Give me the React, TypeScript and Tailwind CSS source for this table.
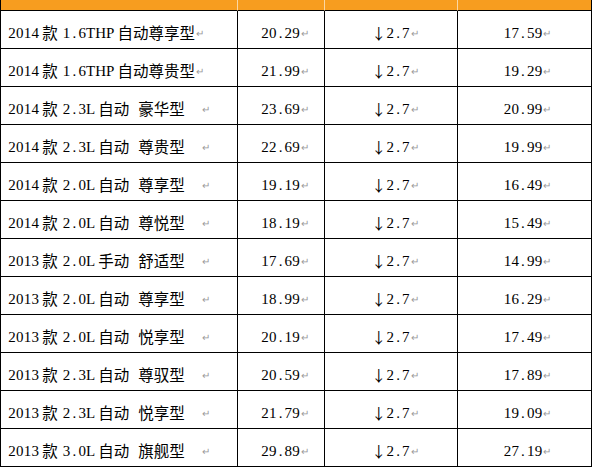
type Row = { year: string; spec: string; trans: string; trim?: string; price: string; final: string };

const rows: Row[] = [
  { year: '2014', spec: '1.6THP', trans: '自动尊享型', price: '20.29', final: '17.59' },
  { year: '2014', spec: '1.6THP', trans: '自动尊贵型', price: '21.99', final: '19.29' },
  { year: '2014', spec: '2.3L', trans: '自动', trim: '豪华型', price: '23.69', final: '20.99' },
  { year: '2014', spec: '2.3L', trans: '自动', trim: '尊贵型', price: '22.69', final: '19.99' },
  { year: '2014', spec: '2.0L', trans: '自动', trim: '尊享型', price: '19.19', final: '16.49' },
  { year: '2014', spec: '2.0L', trans: '自动', trim: '尊悦型', price: '18.19', final: '15.49' },
  { year: '2013', spec: '2.0L', trans: '手动', trim: '舒适型', price: '17.69', final: '14.99' },
  { year: '2013', spec: '2.0L', trans: '自动', trim: '尊享型', price: '18.99', final: '16.29' },
  { year: '2013', spec: '2.0L', trans: '自动', trim: '悦享型', price: '20.19', final: '17.49' },
  { year: '2013', spec: '2.3L', trans: '自动', trim: '尊驭型', price: '20.59', final: '17.89' },
  { year: '2013', spec: '2.3L', trans: '自动', trim: '悦享型', price: '21.79', final: '19.09' },
  { year: '2013', spec: '3.0L', trans: '自动', trim: '旗舰型', price: '29.89', final: '27.19' },
];

const cjk = { fontFamily: '"Noto Sans CJK SC", sans-serif' };

// half-width digits like SimSun: every digit and dot takes the same width
const Half = ({ text }: { text: string }) => (
  <span className="inline-flex">
    {text.split('').map((c, i) =>
      /[0-9.]/.test(c) ? (
        <span key={i} className="inline-block w-[7.8px] text-center">{c}</span>
      ) : (
        <span key={i}>{c}</span>
      )
    )}
  </span>
);

// Word paragraph mark
const Mark = ({ className = '' }: { className?: string }) => (
  <span className={`ml-[1px] text-[10px] leading-none text-[#9a9a9a] ${className}`} style={cjk}>
    ↵
  </span>
);

const cell = 'flex h-[38px] items-center border-r border-b border-black pt-[7px]';

export default function App() {
  return (
    <div
      className="h-[472px] w-[595px] bg-white text-[15px] text-black"
      style={{ fontFamily: '"Liberation Serif", "Noto Sans CJK SC", serif' }}
    >
      <div className="grid w-[592px] grid-cols-[237px_87px_133px_134px] border-l border-black">
        {/* header */}
        <div className="h-[11px] border-r border-b border-r-[#fbd7a4] border-b-black bg-[#f79d1f]" />
        <div className="h-[11px] border-r border-b border-r-[#fbd7a4] border-b-black bg-[#f79d1f]" />
        <div className="h-[11px] border-r border-b border-r-[#fbd7a4] border-b-black bg-[#f79d1f]" />
        <div className="h-[11px] border-r border-b border-r-black border-b-black bg-[#f79d1f]" />

        {rows.map((r) => (
          <div key={r.year + r.spec + r.trans + r.trim} className="contents">
            <div className={`${cell} pl-[7px]`}>
              <Half text={r.year} />
              <span className="ml-[3px] text-[15.5px]" style={cjk}>款</span>
              <span className="ml-[5px]"><Half text={r.spec} /></span>
              <span className="ml-[3px] text-[15.5px]" style={cjk}>{r.trans}</span>
              {r.trim && (
                <span className="ml-[9px] text-[15.5px]" style={cjk}>{r.trim}</span>
              )}
              <Mark className={r.trim ? 'ml-[17px]' : ''} />
            </div>
            <div className={`${cell} justify-end pr-[15px]`}>
              <Half text={r.price} />
              <Mark />
            </div>
            <div className={`${cell} justify-center pl-[8px]`}>
              <span style={cjk}>↓</span>
              <Half text="2.7" />
              <Mark />
            </div>
            <div className={`${cell} justify-center pl-[6px]`}>
              <Half text={r.final} />
              <Mark />
            </div>
          </div>
        ))}
      </div>
    </div>
  );
}
